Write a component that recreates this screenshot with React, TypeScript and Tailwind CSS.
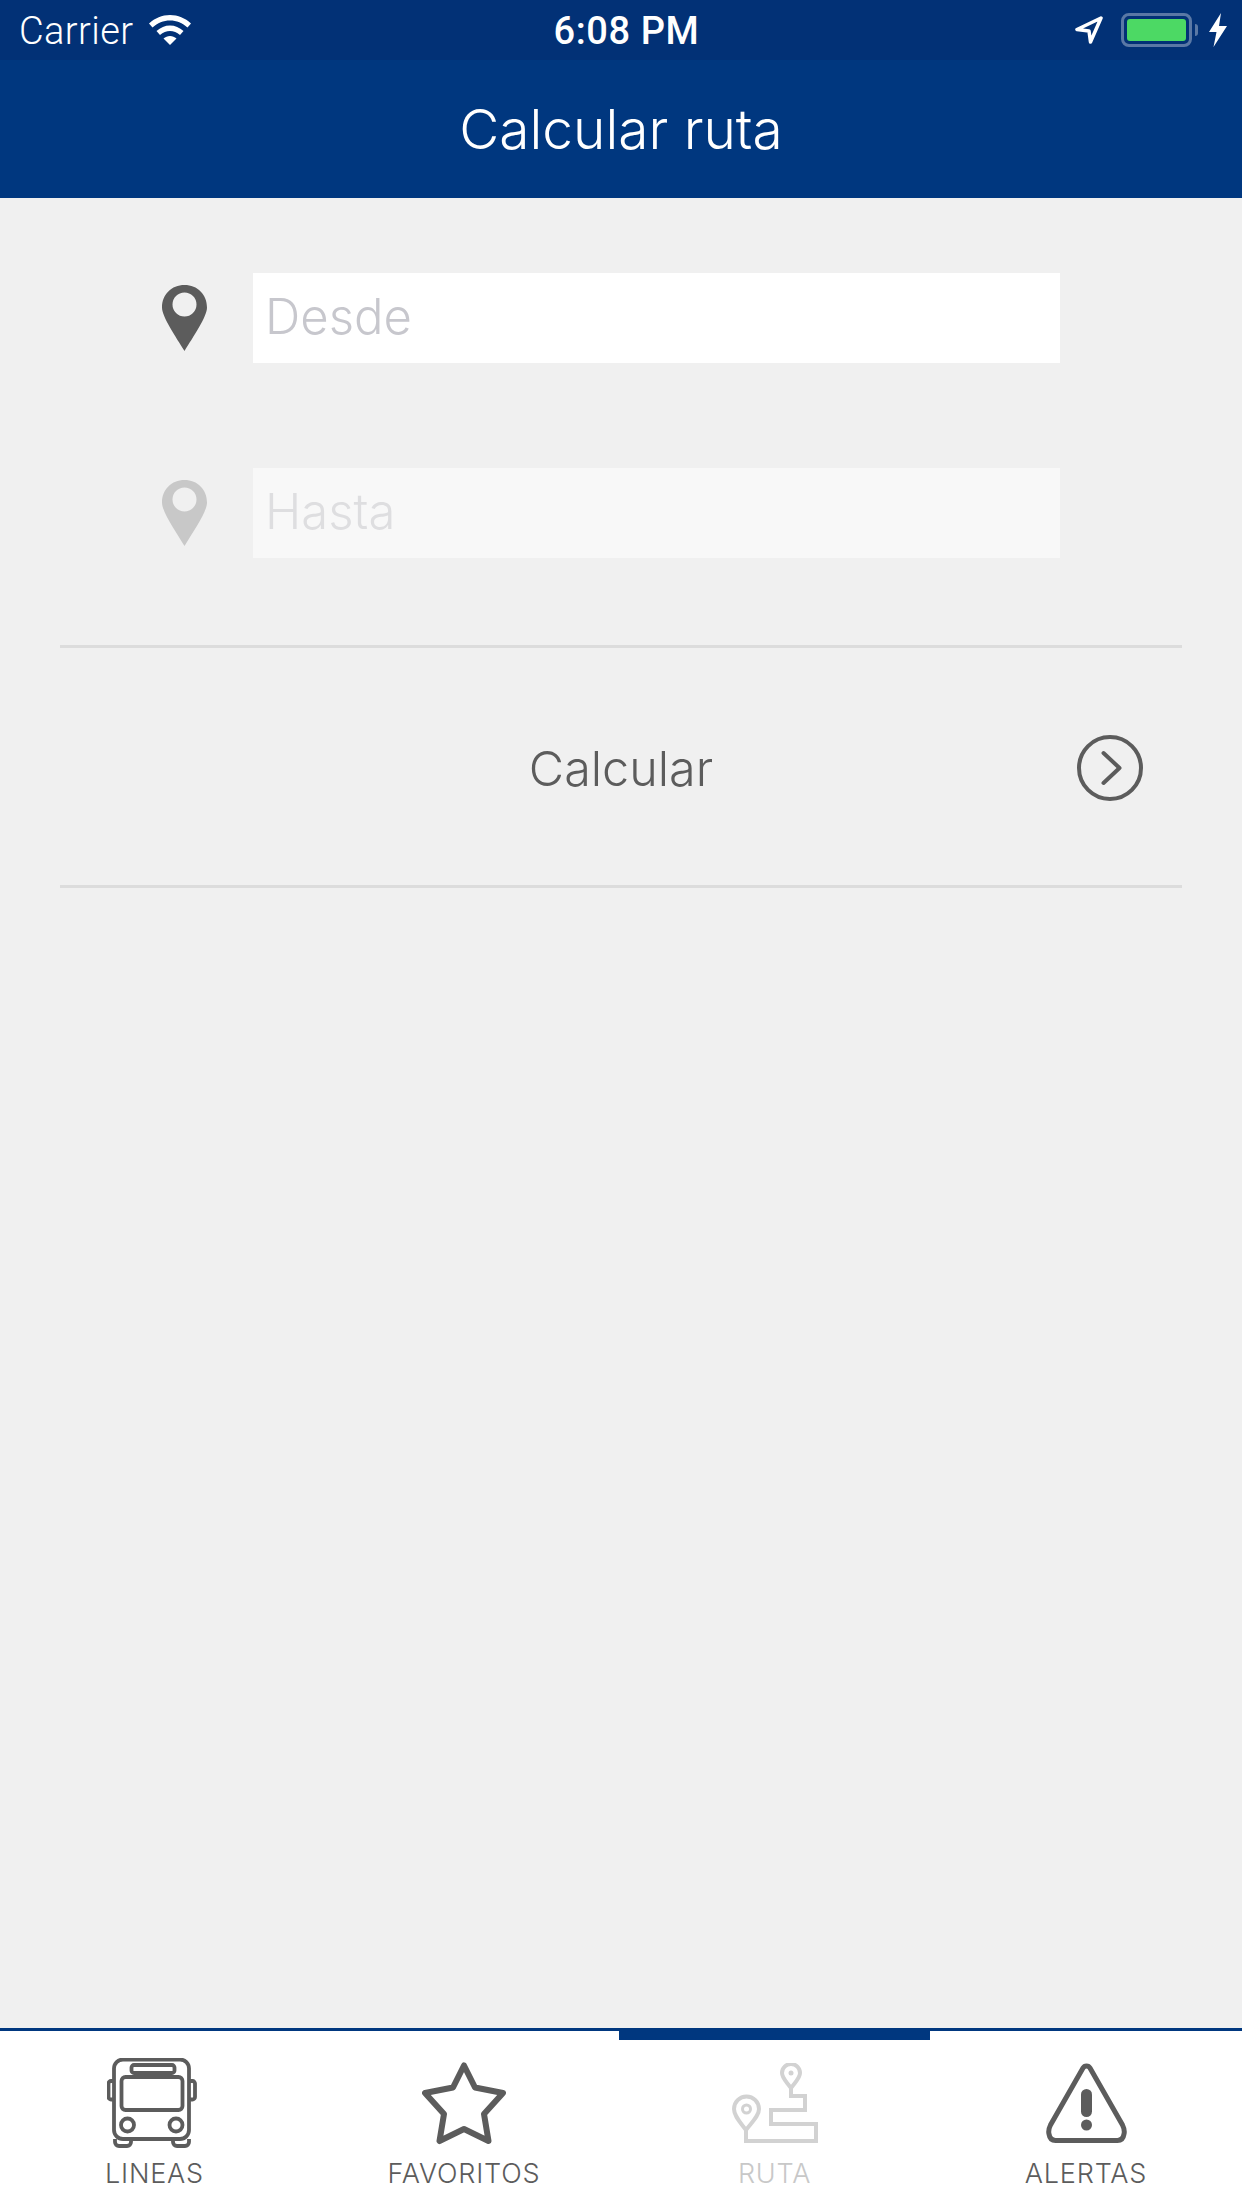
import React from 'react';

const Pin = ({ color }: { color: string }) => (
  <svg width="45" height="66" viewBox="0 0 45 66" className="shrink-0">
    <path
      fillRule="evenodd"
      fill={color}
      d="M22.5 0C9.5 0 0 9.5 0 22.5C0 32 14 52 22.5 66C31 52 45 32 45 22.500C45 9.500 35.500 0 22.500 0ZM22.500 7.500a12 12 0 1 1 0 24a12 12 0 0 1 0-24Z"
    />
  </svg>
);

const BusIcon = () => (
  <svg width="90" height="90" viewBox="0 0 90 90" fill="none" stroke="#5c5c5c" strokeWidth="3.800" className="mr-[6px]">
    <path d="M16 1.500H73a9 9 0 0 1 9 9V72a9 9 0 0 1-9 9H16a9 9 0 0 1-9-9V10.500a9 9 0 0 1 9-9Z" />
    <rect x="24.500" y="7" width="43" height="8" rx="2.500" />
    <rect x="14.500" y="19" width="61" height="33" rx="4" />
    <circle cx="20.500" cy="67" r="6.500" />
    <circle cx="69" cy="67" r="6.500" />
    <path d="M7 23H4a2.500 2.500 0 0 0-2.500 2.500V39A2.500 2.500 0 0 0 4 41.500H7" />
    <path d="M82 23H85.500A2.500 2.500 0 0 1 88 25.500V39A2.500 2.500 0 0 1 85.500 41.500H82" />
    <path d="M8 81V84a4 4 0 0 0 4 4H20a4 4 0 0 0 4-4V81" />
    <path d="M66 81V84a4 4 0 0 0 4 4H78a4 4 0 0 0 4-4V81" />
  </svg>
);

const StarIcon = () => (
  <svg width="84" height="83" viewBox="0 0 84 83" fill="none" stroke="#5c5c5c" strokeWidth="6" strokeLinejoin="round">
    <path d="M42 3.500L53 25.500L81 31L62 52L66.500 79L42 67L17.500 79L22 52L3 31L31 25.500Z" />
  </svg>
);

const RutaIcon = () => (
  <svg width="86" height="80" viewBox="0 0 86 80" fill="none" stroke="#d2d2d2" strokeWidth="4">
    <path d="M59 25C54 18 50 15 50 10a9 9 0 0 1 18 0C68 15 64 18 59 25Z" />
    <circle cx="59" cy="10" r="2.500" fill="#d2d2d2" stroke="none" />
    <path d="M14 67C8 59 2 53 2 46a12.500 12.500 0 0 1 25 0C27 53 20 59 14 67Z" />
    <circle cx="14.500" cy="46" r="4" strokeWidth="3" />
    <path d="M59 25V33H73V47H39V61H84V78H14V67" />
  </svg>
);

const AlertIcon = () => (
  <svg width="81" height="80" viewBox="0 0 81 80" fill="none">
    <path
      stroke="#5c5c5c"
      strokeWidth="5"
      d="M37 5a4 4 0 0 1 7 0L76.500 62q2.500 5 1.500 9q-1 6.500-6.500 6.500H9.500Q4 77.500 3 71q-1-4 1.500-9Z"
    />
    <rect x="35" y="26" width="11" height="28" rx="5.500" fill="#5c5c5c" />
    <circle cx="40.500" cy="62" r="5.500" fill="#5c5c5c" />
  </svg>
);

const tabs = [
  { label: 'LINEAS', icon: <BusIcon />, active: false },
  { label: 'FAVORITOS', icon: <StarIcon />, active: false },
  { label: 'RUTA', icon: <RutaIcon />, active: true },
  { label: 'ALERTAS', icon: <AlertIcon />, active: false },
];

const App: React.FC = () => {
  return (
    <div className="h-[2208px] w-[1242px] flex flex-col bg-[#f0f0f0] overflow-hidden font-['Inter',sans-serif]">
      {/* Status bar */}
      <div className="h-[60px] bg-[#023176] text-white flex items-center justify-between pl-[19px] pr-[15px] shrink-0">
        <div className="w-[407px] flex items-center gap-[16px]">
          <span className="pt-[2px] text-[38px] leading-none font-light tracking-[0.4px] font-['Roboto',sans-serif]">Carrier</span>
          <svg width="42" height="30" viewBox="0 0 42 30" fill="white">
            <path d="M21 0C13 0 6 3 0 8.500L3.500 12.500C8.500 8 14.500 5.500 21 5.500S33.500 8 38.500 12.500L42 8.500C36 3 29 0 21 0Z" />
            <path d="M21 10.500C16 10.500 11.500 12.500 7.500 16L11 20C14 17.500 17.500 16 21 16S28 17.500 31 20L34.500 16C30.500 12.500 26 10.500 21 10.500Z" />
            <path d="M21 21C18.500 21 16.500 22 14.500 23.500L21 30L27.500 23.500C25.500 22 23.500 21 21 21Z" />
          </svg>
        </div>
        <span className="pt-[2px] text-[38px] leading-none font-medium tracking-[0.6px] font-['Roboto',sans-serif]">6:08 PM</span>
        <div className="w-[400px] flex items-center justify-end">
          <svg width="28" height="28" viewBox="0 0 28 28" fill="none" stroke="white" strokeWidth="3.500" strokeLinejoin="round" className="mr-[18px]">
            <path d="M26 2L2 13.500L14 15L15.500 26Z" />
          </svg>
          <div className="w-[71px] h-[34px] rounded-[8px] border-[3px] border-white/35 p-[3px]">
            <div className="h-full rounded-[3px] bg-[#4cd964]" />
          </div>
          <div className="w-[3px] h-[12px] bg-white/35 rounded-r-[3px] ml-[3px] mr-[11px]" />
          <svg width="18" height="34" viewBox="0 0 18 34" fill="white">
            <path d="M12 0L0 19H7.500L4.500 34L18 13H10Z" />
          </svg>
        </div>
      </div>

      {/* Header */}
      <div className="h-[138px] bg-[#00377f] text-white flex items-center justify-center shrink-0">
        <h1 className="text-[55px] leading-none font-light">Calcular ruta</h1>
      </div>

      {/* Form */}
      <div className="flex-1 pt-[75px]">
        <div className="flex items-center gap-[46px] pl-[162px]">
          <Pin color="#5c5c5c" />
          <div className="w-[807px] h-[90px] bg-white flex items-center pl-[12px] pb-[2px] text-[49px] font-light text-[#c7c7cd]">
            Desde
          </div>
        </div>
        <div className="flex items-center gap-[46px] pl-[162px] mt-[105px]">
          <Pin color="#c8c8c8" />
          <div className="w-[807px] h-[90px] bg-[#f8f8f8] flex items-center pl-[12px] pb-[2px] text-[49px] font-light text-[#dedee0]">
            Hasta
          </div>
        </div>
        <div className="mt-[87px] mx-[60px] border-y-[3px] border-[#dcdcdc] h-[243px] grid grid-cols-[1fr_auto_1fr] items-center pt-[3px]">
          <div />
          <span className="pt-[2px] text-[48.500px] leading-none font-light text-[#5c5c5c]">Calcular</span>
          <div className="flex justify-end pr-[39px]">
            <svg width="66" height="66" viewBox="0 0 66 66" fill="none" stroke="#5c5c5c" strokeWidth="4" strokeLinecap="round" strokeLinejoin="round">
              <circle cx="33" cy="33" r="31" />
              <path d="M26.500 18L42.500 33L26.500 48" />
            </svg>
          </div>
        </div>
      </div>

      {/* Tab bar */}
      <div className="h-[180px] bg-white border-t-[3px] border-[#00377f] grid grid-cols-[309px_310px_311px_312px] shrink-0">
        {tabs.map((tab) => (
          <div key={tab.label} className="flex flex-col items-center">
            <div className={tab.active ? 'w-full h-[9px] bg-[#00377f]' : 'w-full h-[9px]'} />
            <div className="h-[90px] mt-[18px] flex items-center justify-center">{tab.icon}</div>
            <span
              className={
                tab.active
                  ? 'mt-[11px] text-[27px] leading-[30px] font-light tracking-[0.8px] text-[#c8c8c8]'
                  : 'mt-[11px] text-[27px] leading-[30px] font-light tracking-[0.8px] text-[#5c5c5c]'
              }
            >
              {tab.label}
            </span>
          </div>
        ))}
      </div>
    </div>
  );
};

export default App;
